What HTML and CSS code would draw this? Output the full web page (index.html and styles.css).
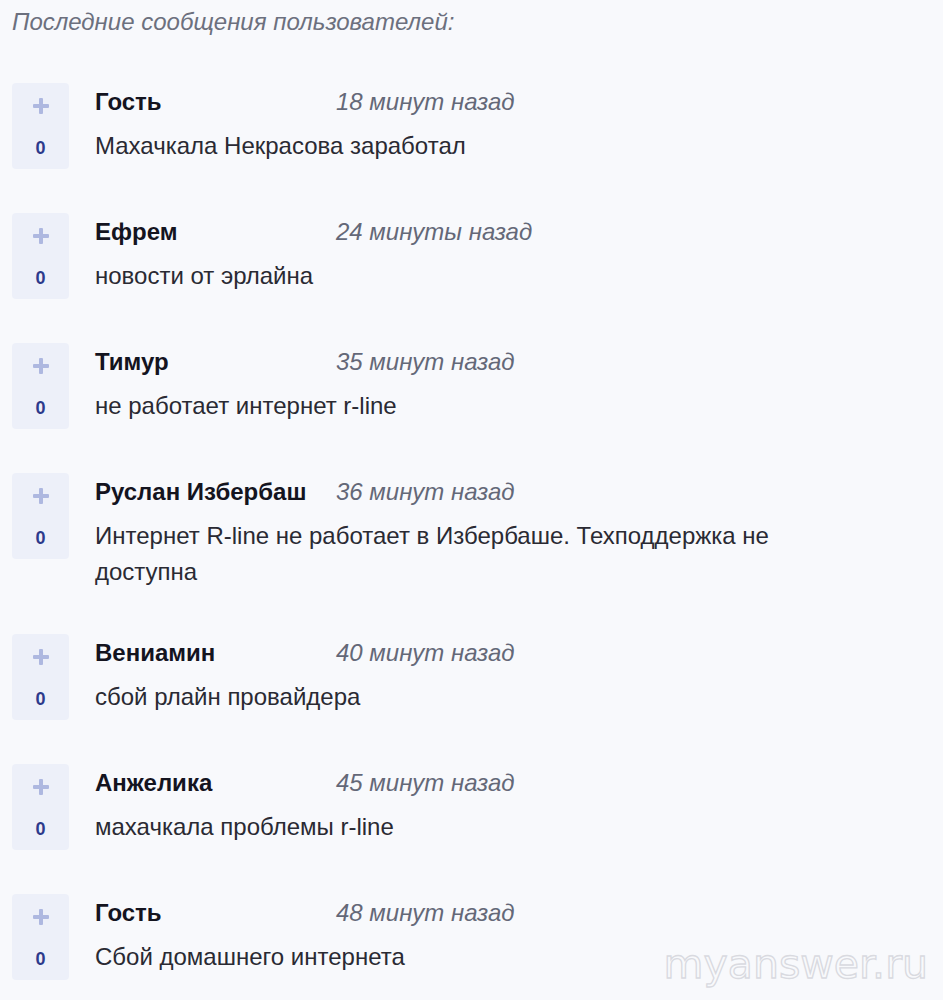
FILE: index.html
```html
<!DOCTYPE html>
<html lang="ru">
<head>
<meta charset="utf-8">
<title>Последние сообщения</title>
<link rel="stylesheet" href="styles.css">
</head>
<body>
<div class="page">
  <h2 class="title">Последние сообщения пользователей:</h2>
  <div class="list">
    <div class="row">
      <div class="vote"><span class="plus"></span><span class="count">0</span></div>
      <div class="body">
        <div class="head"><span class="name">Гость</span><span class="time">18 минут назад</span></div>
        <div class="msg">Махачкала Некрасова заработал</div>
      </div>
    </div>
    <div class="row">
      <div class="vote"><span class="plus"></span><span class="count">0</span></div>
      <div class="body">
        <div class="head"><span class="name">Ефрем</span><span class="time">24 минуты назад</span></div>
        <div class="msg">новости от эрлайна</div>
      </div>
    </div>
    <div class="row">
      <div class="vote"><span class="plus"></span><span class="count">0</span></div>
      <div class="body">
        <div class="head"><span class="name">Тимур</span><span class="time">35 минут назад</span></div>
        <div class="msg">не работает интернет r-line</div>
      </div>
    </div>
    <div class="row">
      <div class="vote"><span class="plus"></span><span class="count">0</span></div>
      <div class="body">
        <div class="head"><span class="name">Руслан Избербаш</span><span class="time">36 минут назад</span></div>
        <div class="msg">Интернет R-line не работает в Избербаше. Техподдержка не доступна</div>
      </div>
    </div>
    <div class="row">
      <div class="vote"><span class="plus"></span><span class="count">0</span></div>
      <div class="body">
        <div class="head"><span class="name">Вениамин</span><span class="time">40 минут назад</span></div>
        <div class="msg">сбой рлайн провайдера</div>
      </div>
    </div>
    <div class="row">
      <div class="vote"><span class="plus"></span><span class="count">0</span></div>
      <div class="body">
        <div class="head"><span class="name">Анжелика</span><span class="time">45 минут назад</span></div>
        <div class="msg">махачкала проблемы r-line</div>
      </div>
    </div>
    <div class="row">
      <div class="vote"><span class="plus"></span><span class="count">0</span></div>
      <div class="body">
        <div class="head"><span class="name">Гость</span><span class="time">48 минут назад</span></div>
        <div class="msg">Сбой домашнего интернета</div>
      </div>
    </div>
  </div>
  <div class="watermark">myanswer.ru</div>
</div>
</body>
</html>
```
FILE: styles.css
```css
html, body {
  margin: 0;
  padding: 0;
  background: #f8f9fc;
}
body {
  font-family: "Liberation Sans", Arial, sans-serif;
  width: 943px;
  height: 1000px;
  overflow: hidden;
}
.page {
  position: relative;
  height: 1000px;
  padding: 0 12px;
  box-sizing: border-box;
}
.title {
  margin: 0;
  padding-top: 8px;
  font-size: 24px;
  line-height: 28px;
  font-weight: normal;
  font-style: italic;
  color: #6c707e;
}
.list {
  display: flex;
  flex-direction: column;
  gap: 44px;
  margin-top: 47px;
}
.row {
  display: flex;
  align-items: flex-start;
  gap: 26px;
}
.vote {
  flex: 0 0 57px;
  height: 86px;
  background: #edf0f9;
  border-radius: 4px;
  display: flex;
  flex-direction: column;
  align-items: center;
}
.plus {
  position: relative;
  width: 16px;
  height: 16px;
  margin-top: 15px;
}
.plus::before,
.plus::after {
  content: "";
  position: absolute;
  background: #aeb8e0;
  border-radius: 1px;
}
.plus::before {
  left: 0;
  top: 6px;
  width: 16px;
  height: 4px;
}
.plus::after {
  left: 6px;
  top: 0;
  width: 4px;
  height: 16px;
}
.count {
  margin-top: 24px;
  font-size: 18px;
  font-weight: bold;
  line-height: 20px;
  color: #2d3a8c;
}
.body {
  width: 700px;
}
.head {
  display: flex;
  line-height: 38px;
  font-size: 24px;
}
.name {
  min-width: 241px;
  font-weight: bold;
  color: #14141f;
}
.time {
  font-style: italic;
  color: #646878;
}
.msg {
  margin-top: 7px;
  font-size: 24px;
  line-height: 36px;
  color: #2a2a33;
}
.watermark {
  position: absolute;
  right: 15px;
  bottom: 14px;
  font-family: "DejaVu Sans", sans-serif;
  font-size: 41px;
  line-height: 44px;
  color: transparent;
  -webkit-text-stroke: 1.3px #d9dae0;
}
```
